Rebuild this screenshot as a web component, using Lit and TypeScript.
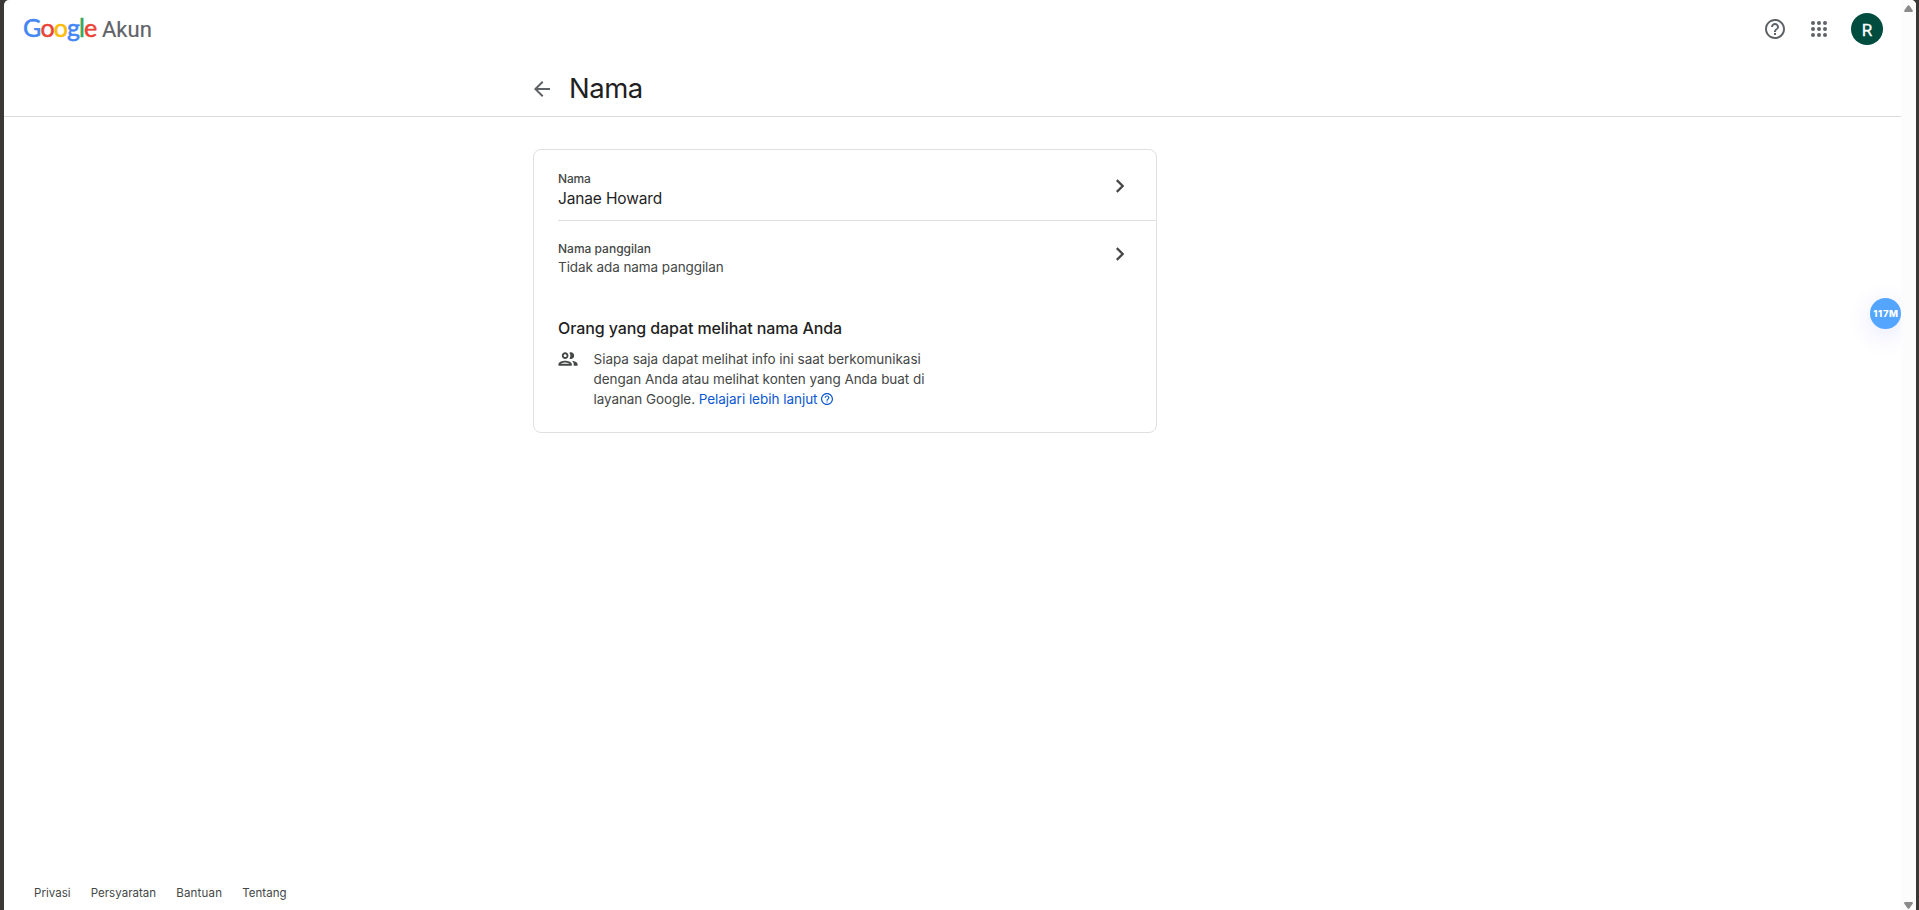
import { LitElement, html, css, svg } from "lit";
import { customElement, property } from "lit/decorators.js";

const icons = {
  help: svg`<path d="M11 18h2v-2h-2v2zm1-16C6.480 2 2 6.480 2 12s4.480 10 10 10 10-4.480 10-10S17.520 2 12 2zm0 18c-4.410 0-8-3.590-8-8s3.590-8 8-8 8 3.590 8 8-3.590 8-8 8zm0-14c-2.210 0-4 1.790-4 4h2c0-1.100.9-2 2-2s2 .9 2 2c0 2-3 1.750-3 5h2c0-2.250 3-2.500 3-5 0-2.210-1.790-4-4-4z"/>`,
  apps: svg`<circle cx="6" cy="6" r="2"/><circle cx="12" cy="6" r="2"/><circle cx="18" cy="6" r="2"/><circle cx="6" cy="12" r="2"/><circle cx="12" cy="12" r="2"/><circle cx="18" cy="12" r="2"/><circle cx="6" cy="18" r="2"/><circle cx="12" cy="18" r="2"/><circle cx="18" cy="18" r="2"/>`,
  back: svg`<path d="M20 11H7.830l5.590-5.590L12 4l-8 8 8 8 1.410-1.410L7.830 13H20v-2z"/>`,
  chevron: svg`<path d="M9.600 5.300L8 6.900 13.100 12 8 17.100l1.600 1.600L16.300 12z"/>`,
  group: svg`<path d="M9 12c1.930 0 3.500-1.570 3.500-3.500S10.930 5 9 5 5.500 6.570 5.500 8.500 7.070 12 9 12zm0-5c.83 0 1.500.67 1.500 1.500S9.830 10 9 10s-1.500-.67-1.500-1.500S8.170 7 9 7zm0 6.750c-2.340 0-7 1.170-7 3.500V19h14v-1.750c0-2.330-4.660-3.500-7-3.500zM4.340 17c.84-.58 2.870-1.250 4.660-1.250s3.820.67 4.660 1.250H4.340zm11.700-3.190c1.160.84 1.960 1.960 1.960 3.440V19h4v-1.750c0-2.020-3.500-3.170-5.960-3.440zM15 12c1.930 0 3.500-1.570 3.500-3.500S16.930 5 15 5c-.54 0-1.040.13-1.500.35.63.89 1 1.980 1 3.150s-.37 2.260-1 3.150c.46.22.96.35 1.500.35z"/>`,
};

@customElement("ui-icon")
class UiIcon extends LitElement {
  @property() name: keyof typeof icons = "help";
  @property() box = "0 0 24 24";
  static styles = css`
    :host { display: block; width: 24px; height: 24px; flex: none; }
    svg { display: block; width: 100%; height: 100%; fill: currentColor; }
  `;
  render() {
    return html`<svg viewBox=${this.box} aria-hidden="true">${icons[this.name]}</svg>`;
  }
}

@customElement("app-root")
class AppRoot extends LitElement {
  static styles = css`
    :host { display: block; height: 910px; background: #3a3836; font-family: Inter, "Noto Sans", sans-serif; color: #1f1f1f; }
    * { box-sizing: border-box; }
    .window { display: flex; height: 100%; margin: 0 3px 0 4px; border-radius: 5px 5px 0 0; background: #fff; overflow: hidden; position: relative; }
    .page { flex: 1; display: flex; flex-direction: column; }
    .scroll { width: 15px; background: #fcfcfc; display: flex; flex-direction: column; justify-content: space-between; align-items: center; padding: 5px 0 1px; }
    .scroll svg { display: block; fill: #8b8b8b; }
    .top { height: 60px; padding: 0 18px 0 19px; display: flex; align-items: center; justify-content: space-between; }
    .brand { display: flex; align-items: baseline; padding-bottom: 3px; line-height: 30px; }
    .logo { font: 400 25px/30px Lato, sans-serif; letter-spacing: -0.900px; -webkit-text-stroke: 0.500px currentColor; display: flex; width: 79px; }
    .b { color: #4285f4; -webkit-text-stroke-color: #4285f4; }
    .r { color: #ea4335; -webkit-text-stroke-color: #ea4335; }
    .y { color: #fbbc05; -webkit-text-stroke-color: #fbbc05; }
    .g { color: #34a853; -webkit-text-stroke-color: #34a853; }
    .akun { font-family: Roboto, sans-serif; font-size: 22px; color: #5f6368; -webkit-text-stroke: 0.200px #5f6368; }
    .tools { display: flex; align-items: center; gap: 20px; color: #5f6368; padding-bottom: 2px; }
    .avatar { width: 32px; height: 32px; border-radius: 50%; background: #004d40; color: #fff; font: 400 17px/34px Roboto, sans-serif; -webkit-text-stroke: 0.300px #fff; text-align: center; }
    .head { height: 57px; padding-left: 526px; border-bottom: 1px solid #dadce0; display: flex; gap: 15px; }
    .head ui-icon { color: #5f6368; margin-top: 17px; }
    h1 { margin: 0; padding-top: 10px; font: 400 27.500px/36px Inter, sans-serif; letter-spacing: -0.500px; }
    .card { width: 624px; height: 284px; margin: 32px 0 0 529px; border: 1px solid #e0e0e0; border-radius: 8px; padding: 21px 0 0 24px; }
    .row { display: flex; justify-content: space-between; padding-right: 24px; }
    .row.first { height: 50px; border-bottom: 1px solid #e0e0e0; }
    .row.second { height: 95px; padding-top: 20px; }
    .label { font-weight: 500; font-size: 12px; line-height: 16px; color: #444746; letter-spacing: 0; }
    .first .label { letter-spacing: -0.200px; }
    .name { font-size: 15.500px; line-height: 24px; letter-spacing: -0.150px; }
    .nick { font-size: 13.500px; line-height: 20px; color: #444746; letter-spacing: -0.080px; }
    .chev { color: #444746; margin-top: 1px; }
    .first .chev { margin-top: 3px; }
    h2 { margin: 0; font: 500 16px/24px Inter, sans-serif; letter-spacing: -0.100px; }
    .info { display: flex; gap: 15.500px; padding-top: 9px; }
    .info ui-icon { width: 20px; height: 20px; color: #444746; }
    .text { font-size: 13.500px; line-height: 20px; color: #444746; letter-spacing: -0.020px; }
    .line { display: flex; white-space: pre; }
    .wide { letter-spacing: -0.040px; }
    .last { letter-spacing: -0.080px; }
    .link { color: #0b57d0; display: flex; align-items: center; gap: 4px; letter-spacing: -0.030px; }
    .info .link ui-icon { width: 12px; height: 12px; color: #0b57d0; }
    footer { margin-top: auto; padding: 0 0 9px 30px; display: flex; gap: 20px; font-size: 11.500px; line-height: 16px; color: #444746; letter-spacing: 0.040px; }
    footer :nth-child(3) { letter-spacing: 0.200px; }
    .clip { position: absolute; inset: 0 15px 0 0; overflow: hidden; pointer-events: none; }
    .badge { position: absolute; left: 1866px; top: 298px; width: 31px; height: 31px; border-radius: 50%; background: #54a5ff; color: #fff; font: 800 9.500px/31px Inter, sans-serif; letter-spacing: 0.600px; text-indent: 1px; text-align: center; box-shadow: 0 6px 24px rgba(90, 90, 255, 0.160); }
  `;
  render() {
    return html`
      <div class="window">
        <div class="page">
          <header class="top">
            <div class="brand">
              <span class="logo"><span class="b">G</span><span class="r">o</span><span class="y">o</span><span class="b">g</span><span class="g">l</span><span class="r">e</span></span>
              <span class="akun">Akun</span>
            </div>
            <div class="tools">
              <ui-icon name="help"></ui-icon>
              <ui-icon name="apps"></ui-icon>
              <div class="avatar">R</div>
            </div>
          </header>
          <div class="head"><ui-icon name="back"></ui-icon><h1>Nama</h1></div>
          <main class="card">
            <div class="row first">
              <div><div class="label">Nama</div><div class="name">Janae Howard</div></div>
              <ui-icon class="chev" name="chevron"></ui-icon>
            </div>
            <div class="row second">
              <div><div class="label">Nama panggilan</div><div class="nick">Tidak ada nama panggilan</div></div>
              <ui-icon class="chev" name="chevron"></ui-icon>
            </div>
            <h2>Orang yang dapat melihat nama Anda</h2>
            <div class="info">
              <ui-icon name="group" box="1.5 1.5 21 21"></ui-icon>
              <div class="text">
                <div class="line">Siapa saja dapat melihat info ini saat berkomunikasi</div>
                <div class="line wide">dengan Anda atau melihat konten yang Anda buat di</div>
                <div class="line last">layanan Google. <span class="link"><span>Pelajari lebih lanjut</span><ui-icon name="help" box="2 2 20 20"></ui-icon></span></div>
              </div>
            </div>
          </main>
          <footer><span>Privasi</span><span>Persyaratan</span><span>Bantuan</span><span>Tentang</span></footer>
        </div>
        <div class="scroll">
          <svg width="9" height="7" viewBox="0 0 9 7"><path d="M3.500 .8Q4.500-.5 5.500 .8L8.800 5.500Q9 7 8 7H1Q0 7 .2 5.500Z"/></svg>
          <svg width="9" height="7" viewBox="0 0 9 7"><path d="M3.500 6.200Q4.500 7.500 5.500 6.200L8.800 1.500Q9 0 8 0H1Q0 0 .2 1.500Z"/></svg>
        </div>
        <div class="clip"><div class="badge">117M</div></div>
      </div>`;
  }
}
